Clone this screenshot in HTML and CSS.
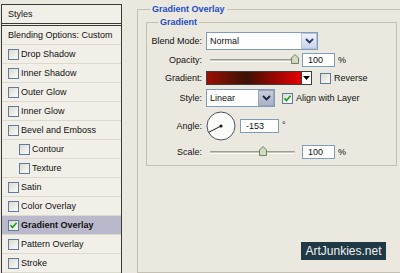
FILE: index.html
```html
<!DOCTYPE html>
<html lang="en">
<head>
    <meta charset="UTF-8">
    <meta name="viewport" content="width=device-width, initial-scale=1.0">
    <title>Layer Style - Gradient Overlay</title>
    <link rel="stylesheet" href="styles.css">
</head>
<body>
    <div class="styles-panel">
        <div class="panel-head">Styles</div>
        <div class="panel-row">Blending Options: Custom</div>
        <div class="style-item"><span class="check"></span>Drop Shadow</div>
        <div class="style-item"><span class="check"></span>Inner Shadow</div>
        <div class="style-item"><span class="check"></span>Outer Glow</div>
        <div class="style-item"><span class="check"></span>Inner Glow</div>
        <div class="style-item"><span class="check"></span>Bevel and Emboss</div>
        <div class="style-item sub"><span class="check"></span>Contour</div>
        <div class="style-item sub"><span class="check"></span>Texture</div>
        <div class="style-item"><span class="check"></span>Satin</div>
        <div class="style-item"><span class="check"></span>Color Overlay</div>
        <div class="style-item active"><span class="check"><svg viewBox="0 0 11 11" width="11" height="11"><path d="M2.5 5.2 L4.5 7.5 L8.6 2.8" fill="none" stroke="#1e9e1e" stroke-width="1.7"/></svg></span>Gradient Overlay</div>
        <div class="style-item"><span class="check"></span>Pattern Overlay</div>
        <div class="style-item"><span class="check"></span>Stroke</div>
    </div>

    <div class="options">
        <fieldset class="group outer">
            <legend>Gradient Overlay</legend>
            <fieldset class="group inner">
                <legend>Gradient</legend>
                <div class="form">
                    <label>Blend Mode:</label>
                    <div class="field">
                        <div class="select blend">
                            <span class="select-value">Normal</span>
                            <span class="select-btn"><svg viewBox="0 0 9 6" width="9" height="6"><path d="M1 1 L4.5 4.5 L8 1" fill="none" stroke="#2b3a55" stroke-width="1.8"/></svg></span>
                        </div>
                    </div>

                    <label>Opacity:</label>
                    <div class="field">
                        <div class="slider">
                            <div class="track">
                                <span class="thumb" style="left: 100%"><svg viewBox="0 0 8 10" width="8" height="10"><path d="M4 0.5 L7.5 4 L7.5 9.5 L0.5 9.5 L0.5 4 Z" fill="#cfdcc2" stroke="#6f7f68"/></svg></span>
                            </div>
                        </div>
                        <span class="num">100</span>
                        <span class="unit">%</span>
                    </div>

                    <label>Gradient:</label>
                    <div class="field">
                        <span class="grad-box"></span>
                        <span class="grad-btn"><svg viewBox="0 0 7 4" width="7" height="4"><path d="M0 0 L7 0 L3.5 4 Z" fill="#000"/></svg></span>
                        <span class="check reverse"></span>
                        <span class="check-label">Reverse</span>
                    </div>

                    <label>Style:</label>
                    <div class="field">
                        <div class="select style">
                            <span class="select-value">Linear</span>
                            <span class="select-btn dark"><svg viewBox="0 0 9 6" width="9" height="6"><path d="M1 1 L4.5 4.5 L8 1" fill="none" stroke="#1d2638" stroke-width="1.8"/></svg></span>
                        </div>
                        <span class="check align"><svg viewBox="0 0 11 11" width="11" height="11"><path d="M2.5 5.2 L4.5 7.5 L8.6 2.8" fill="none" stroke="#1e9e1e" stroke-width="1.7"/></svg></span>
                        <span class="check-label">Align with Layer</span>
                    </div>

                    <label>Angle:</label>
                    <div class="field">
                        <svg class="dial" viewBox="0 0 30 30" width="30" height="30">
                            <circle cx="15" cy="15" r="14" fill="#fbfbf8" stroke="#4c5264"/>
                            <line x1="15" y1="15" x2="2.5" y2="21.4" stroke="#1a1a1a" stroke-width="1"/>
                            <circle cx="15" cy="15" r="1.6" fill="#1a1a1a"/>
                        </svg>
                        <span class="num angle">-153</span>
                        <span class="unit deg">°</span>
                    </div>

                    <label>Scale:</label>
                    <div class="field">
                        <div class="slider">
                            <div class="track">
                                <span class="thumb" style="left: 62%"><svg viewBox="0 0 8 10" width="8" height="10"><path d="M4 0.5 L7.5 4 L7.5 9.5 L0.5 9.5 L0.5 4 Z" fill="#cfdcc2" stroke="#6f7f68"/></svg></span>
                            </div>
                        </div>
                        <span class="num">100</span>
                        <span class="unit">%</span>
                    </div>
                </div>
            </fieldset>
        </fieldset>
    </div>

    <div class="watermark">ArtJunkies.net</div>
</body>
</html>
```

FILE: styles.css
```css
body {
    margin: 0;
    height: 273px;
    overflow: hidden;
    display: flex;
    align-items: flex-start;
    background-color: #ebe8df;
    font-family: "Liberation Sans", Arial, sans-serif;
    font-size: 9px;
    color: #111;
}

/* left list of styles */
.styles-panel {
    flex: none;
    margin: 4px 0 0 1px;
    width: 121px;
    box-sizing: border-box;
    border: 1px solid #3a3a3a;
    border-bottom: none;
    background-color: #f1efe8;
}
.panel-head {
    height: 18px;
    line-height: 18px;
    padding-left: 6px;
    border-bottom: 3px double #3a3a3a;
}
.panel-row,
.style-item {
    height: 18px;
    line-height: 18px;
    padding-left: 6px;
    border-bottom: 1px solid #dcd9cd;
    white-space: nowrap;
}
.style-item {
    display: flex;
    align-items: center;
    gap: 2px;
}
.style-item.sub {
    padding-left: 17px;
}
.style-item.active {
    background-color: #bab9cb;
    font-weight: bold;
}

.check {
    display: inline-block;
    flex: none;
    width: 11px;
    height: 11px;
    box-sizing: border-box;
    border: 1px solid #5f7b9e;
    background: linear-gradient(135deg, #dcdbd3, #fbfbf9);
}
.check svg {
    display: block;
    margin: -1px;
}

/* right options */
.options {
    flex: none;
    margin-left: 15px;
}
.group {
    margin: 0;
    padding: 0;
    border: 1px solid #c4c1b3;
    min-width: 0;
}
.group legend {
    padding: 0 2px;
    margin-left: 12px;
    line-height: 12px;
    font-weight: bold;
    color: #1d4dc6;
}
.outer {
    margin-top: 3px;
    width: 275px;
    height: 270px;
    box-sizing: border-box;
}
.inner {
    margin: 1px 0 0 8px;
    width: 251px;
    box-sizing: border-box;
    padding-bottom: 4px;
}
.inner legend {
    margin-left: 11px;
}

.form {
    padding-top: 3px;
    display: grid;
    grid-template-columns: 55px 1fr;
    grid-template-rows: 20px 18px 18px 22px 34px 18px;
    column-gap: 4px;
    align-items: center;
}
.form label {
    text-align: right;
    white-space: nowrap;
}
.field {
    display: flex;
    align-items: center;
    white-space: nowrap;
}

.select {
    display: flex;
    height: 18px;
    box-sizing: border-box;
    border: 1px solid #7f9db9;
    background-color: #fff;
}
.select.blend {
    width: 112px;
}
.select.style {
    width: 69px;
}
.select-value {
    flex: 1;
    padding-left: 3px;
    line-height: 16px;
}
.select-btn {
    width: 14px;
    display: flex;
    align-items: center;
    justify-content: center;
    border: 1px solid #b7c3dd;
    background: linear-gradient(#eef2fc, #c9d4ee);
}
.select-btn.dark {
    border-color: #9aa3bb;
    background: linear-gradient(#c7cddd, #a9b2c9);
}

.slider {
    width: 94px;
    padding: 0 5px 0 4px;
    box-sizing: border-box;
}
.track {
    position: relative;
    height: 1px;
    border-top: 1px solid #9e9c91;
    border-bottom: 1px solid #fdfdfb;
    background-color: #c9c7bc;
    border-radius: 1px;
}
.thumb {
    position: absolute;
    top: -6px;
    margin-left: -4px;
    line-height: 0;
}

.num {
    display: inline-block;
    margin-left: 2px;
    width: 33px;
    height: 14px;
    box-sizing: border-box;
    border: 1px solid #7f9db9;
    background-color: #fff;
    padding-left: 5px;
    line-height: 12px;
}
.num.angle {
    margin-left: 4px;
    width: 39px;
}
.unit {
    margin-left: 3px;
}
.unit.deg {
    align-self: flex-start;
    margin-top: 9px;
}

.grad-box {
    width: 96px;
    height: 14px;
    box-sizing: border-box;
    border: 1px solid #3d3d3d;
    background: linear-gradient(90deg, #a00c02 0%, #6a1204 20%, #3c1206 42%, #7a0a02 62%, #e80000 100%);
}
.grad-btn {
    width: 10px;
    height: 14px;
    box-sizing: border-box;
    border: 1px solid #3d3d3d;
    border-left: none;
    background-color: #fff;
    display: flex;
    align-items: center;
    justify-content: center;
}
.check.reverse {
    margin-left: 8px;
}
.check.align {
    margin-left: 7px;
}
.check-label {
    margin-left: 3px;
}

.dial {
    display: block;
}

.watermark {
    position: absolute;
    right: 14px;
    bottom: 13px;
    width: 85px;
    height: 18px;
    line-height: 18px;
    text-align: center;
    background-color: #203a45;
    color: #f2f2f2;
    font-size: 12px;
}
```
